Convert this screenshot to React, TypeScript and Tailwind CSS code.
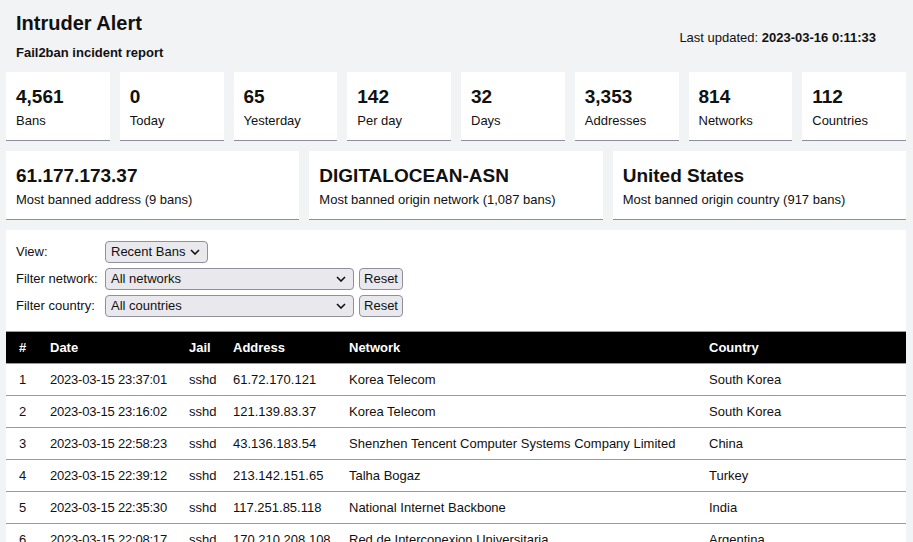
import React from "react";

const stats = [
  { value: "4,561", label: "Bans" },
  { value: "0", label: "Today" },
  { value: "65", label: "Yesterday" },
  { value: "142", label: "Per day" },
  { value: "32", label: "Days" },
  { value: "3,353", label: "Addresses" },
  { value: "814", label: "Networks" },
  { value: "112", label: "Countries" },
];

const highlights = [
  { value: "61.177.173.37", label: "Most banned address (9 bans)" },
  { value: "DIGITALOCEAN-ASN", label: "Most banned origin network (1,087 bans)" },
  { value: "United States", label: "Most banned origin country (917 bans)" },
];

const bans = [
  ["2023-03-15 23:37:01", "sshd", "61.72.170.121", "Korea Telecom", "South Korea"],
  ["2023-03-15 23:16:02", "sshd", "121.139.83.37", "Korea Telecom", "South Korea"],
  ["2023-03-15 22:58:23", "sshd", "43.136.183.54", "Shenzhen Tencent Computer Systems Company Limited", "China"],
  ["2023-03-15 22:39:12", "sshd", "213.142.151.65", "Talha Bogaz", "Turkey"],
  ["2023-03-15 22:35:30", "sshd", "117.251.85.118", "National Internet Backbone", "India"],
  ["2023-03-15 22:08:17", "sshd", "170.210.208.108", "Red de Interconexion Universitaria", "Argentina"],
  ["2023-03-15 21:54:40", "sshd", "61.177.173.37", "CHINANET-BACKBONE", "China"],
];

const Chevron = () => (
  <svg width="10" height="6" viewBox="0 0 10 6" className="pointer-events-none absolute right-[8px] top-[8px]">
    <path d="M1 1l4 4 4-4" fill="none" stroke="#111" strokeWidth="1.6" />
  </svg>
);

const Select = ({ value, width }: { value: string; width: string }) => (
  <div className={`relative h-[22px] ${width}`}>
    <div className="h-full w-full rounded-[4px] border border-[#8f8f9d] bg-[#e9e9ed] pl-[5px] text-[13px] leading-[20px] text-[#111]">
      {value}
    </div>
    <Chevron />
  </div>
);

const ResetButton = () => (
  <button className="h-[22px] w-[44px] rounded-[4px] border border-[#8f8f9d] bg-[#e9e9ed] text-[13px] leading-[20px] text-[#111]">
    Reset
  </button>
);

export default function App() {
  return (
    <div className="min-h-screen bg-[#f2f3f5] pl-[6px] pr-[7px] text-[#111] font-['Liberation_Sans',Arial,sans-serif]">
      <div className="flex justify-between pl-[10px] pr-[30px]">
        <div>
          <h1 className="mt-[11px] text-[20px] font-bold leading-[24px]">Intruder Alert</h1>
          <p className="mt-[10px] text-[13px] font-bold leading-[16px]">Fail2ban incident report</p>
        </div>
        <div className="mt-[30px] text-[13px] leading-[16px]">
          Last updated: <span className="font-bold">2023-03-16 0:11:33</span>
        </div>
      </div>

      <div className="mt-[11px] grid grid-cols-8 gap-[10px]">
        {stats.map((s) => (
          <div key={s.label} className="h-[69px] border-b border-[#8e8e9c] bg-white pl-[10px]">
            <div className="pt-[14px] text-[19px] font-bold leading-[22px]">{s.value}</div>
            <div className="mt-[5px] text-[13px] leading-[16px]">{s.label}</div>
          </div>
        ))}
      </div>

      <div className="mt-[10px] grid grid-cols-3 gap-[10px]">
        {highlights.map((h) => (
          <div key={h.label} className="h-[69px] border-b border-[#8e8e9c] bg-white pl-[10px]">
            <div className="pt-[14px] text-[19px] font-bold leading-[22px]">{h.value}</div>
            <div className="mt-[5px] text-[13px] leading-[16px]">{h.label}</div>
          </div>
        ))}
      </div>

      <div className="mt-[10px] bg-white">
        <div className="flex flex-col gap-[5px] px-[10px] pb-[14px] pt-[11px] text-[13px]">
          <div className="flex items-center">
            <span className="w-[89px]">View:</span>
            <Select value="Recent Bans" width="w-[103px]" />
          </div>
          <div className="flex items-center gap-[5px]">
            <span className="w-[84px]">Filter network:</span>
            <Select value="All networks" width="w-[249px]" />
            <ResetButton />
          </div>
          <div className="flex items-center gap-[5px]">
            <span className="w-[84px]">Filter country:</span>
            <Select value="All countries" width="w-[249px]" />
            <ResetButton />
          </div>
        </div>

        <table className="w-full table-fixed border-collapse text-left text-[13px]">
          <colgroup>
            <col className="w-[34px]" />
            <col className="w-[139px]" />
            <col className="w-[44px]" />
            <col className="w-[116px]" />
            <col className="w-[360px]" />
            <col />
          </colgroup>
          <thead>
            <tr className="h-[32px] border-y border-[#9a9aa2] bg-black text-white">
              <th className="pl-[13px] font-bold">#</th>
              <th className="pl-[10px] font-bold">Date</th>
              <th className="pl-[10px] font-bold">Jail</th>
              <th className="pl-[10px] font-bold">Address</th>
              <th className="pl-[10px] font-bold">Network</th>
              <th className="pl-[10px] font-bold">Country</th>
            </tr>
          </thead>
          <tbody>
            {bans.map((b, i) => (
              <tr key={i} className="h-[32px] border-b border-[#9a9aa2]">
                <td className="pl-[13px]">{i + 1}</td>
                <td className="pl-[10px] tracking-[-0.2px] whitespace-nowrap">{b[0]}</td>
                <td className="pl-[10px]">{b[1]}</td>
                <td className="pl-[10px] whitespace-nowrap">{b[2]}</td>
                <td className="pl-[10px] whitespace-nowrap">{b[3]}</td>
                <td className="pl-[10px]">{b[4]}</td>
              </tr>
            ))}
          </tbody>
        </table>
      </div>
    </div>
  );
}
